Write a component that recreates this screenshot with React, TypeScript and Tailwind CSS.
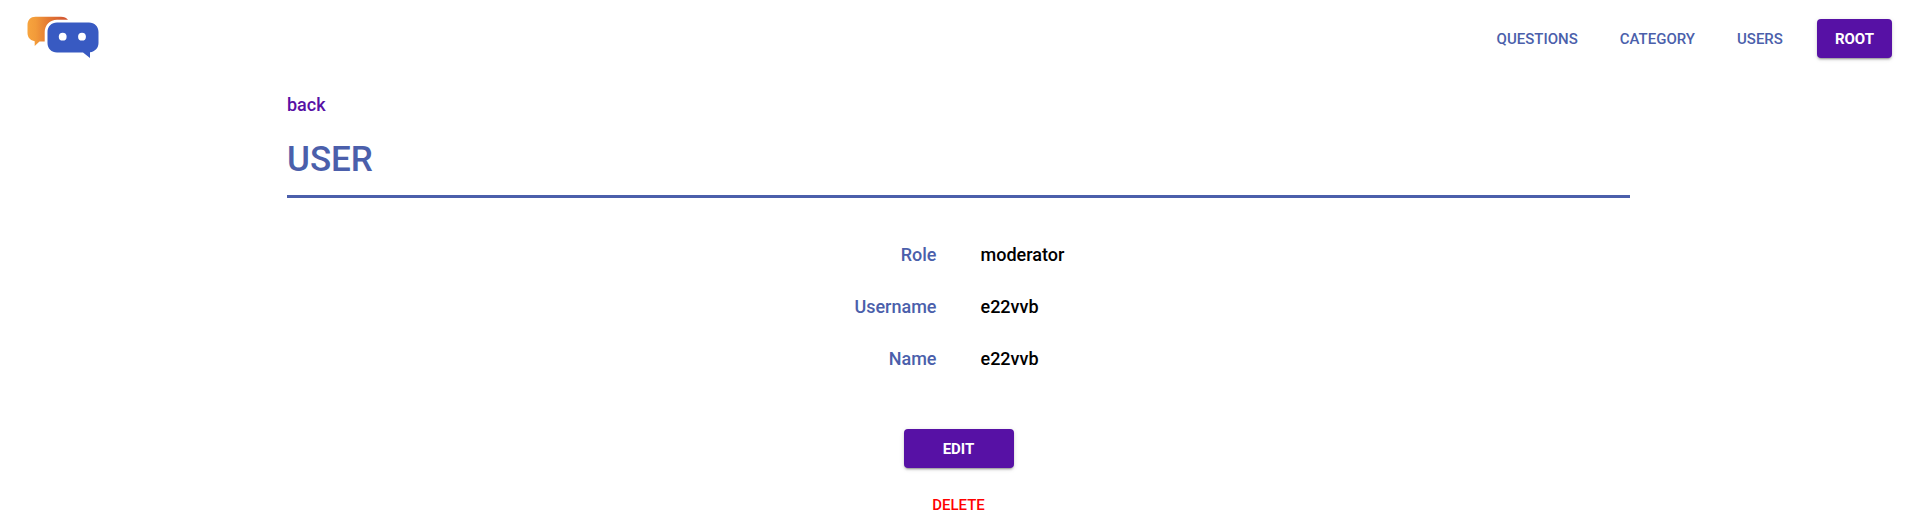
const shadow =
  "shadow-[0_3px_1px_-2px_rgba(0,0,0,0.2),0_2px_2px_0_rgba(0,0,0,0.14),0_1px_5px_0_rgba(0,0,0,0.12)]";

const links = ["Questions", "Category", "Users"];

const fields = [
  { label: "Role", value: "moderator" },
  { label: "Username", value: "e22vvb" },
  { label: "Name", value: "e22vvb" },
];

function Logo() {
  return (
    <svg width="72" height="44" viewBox="0 0 72 44" role="img" aria-label="Home">
      <defs>
        <linearGradient id="bubble" x1="0" y1="0" x2="1" y2="0">
          <stop offset="0" stopColor="#f7a43e" />
          <stop offset="0.2" stopColor="#f29b3a" />
          <stop offset="0.5" stopColor="#e47a32" />
          <stop offset="1" stopColor="#cf5030" />
        </linearGradient>
      </defs>
      <path
        d="M8.500 .7H34C37 .7 39.500 1.700 41 3.700H30C23 3.700 17.700 9 17.700 16V25.500H12.500L7.700 30V25.200C3.500 24.500 .5 21.500 .5 17V9C.5 4 3.500 .7 8.500 .7Z"
        fill="url(#bubble)"
      />
      <path
        d="M30 6.500H62C67.500 6.500 71.500 10.500 71.500 16V27C71.500 32 68 35.600 63 36.300V42L56 36.500H30C24.500 36.500 20.500 32.500 20.500 27V16C20.500 10.500 24.500 6.500 30 6.500Z"
        fill="#385ac2"
      />
      <circle cx="35.700" cy="20.700" r="3.900" fill="#fff" />
      <circle cx="55" cy="20.700" r="3.900" fill="#fff" />
    </svg>
  );
}

export default function App() {
  return (
    <div className="bg-white pl-px font-['Roboto',sans-serif] text-lg font-medium text-black">
      <header className="flex items-center justify-between pt-4 pr-6 pl-[26px]">
        <a href="#home">
          <Logo />
        </a>
        <nav className="flex items-baseline gap-[42px] text-[15px] leading-[28px] text-[#4b5fab] uppercase">
          {links.map((name) => (
            <a key={name} href={"#" + name.toLowerCase()}>
              {name}
            </a>
          ))}
          <button
            type="button"
            className={"-ml-2 rounded bg-[#5711a5] px-[18px] pt-1.5 pb-[5px] font-bold text-white uppercase " + shadow}
          >
            Root
          </button>
        </nav>
      </header>

      <main className="mx-auto w-full max-w-[1343px] pt-[31px] pb-3">
        <a href="#back" className="block w-fit text-[#5711a5]">
          back
        </a>
        <h1 className="mt-5 border-b-3 border-[#4b5fab] pb-3.5 text-[35px] leading-[42px] text-[#4b5fab] uppercase">
          User
        </h1>

        <dl className="mt-[43px] grid gap-6">
          {fields.map((field) => (
            <div key={field.label} className="grid grid-cols-2 gap-11">
              <dt className="text-right text-[#4b5fab]">{field.label}</dt>
              <dd>{field.value}</dd>
            </div>
          ))}
        </dl>

        <div className="mt-14 flex flex-col items-center gap-[23px] text-[15px] leading-[28px]">
          <button
            type="button"
            className={"w-[110px] rounded bg-[#5711a5] pt-1.5 pb-[5px] font-bold text-white uppercase " + shadow}
          >
            Edit
          </button>
          <button type="button" className="text-[#ff0000] uppercase">
            Delete
          </button>
        </div>
      </main>
    </div>
  );
}
